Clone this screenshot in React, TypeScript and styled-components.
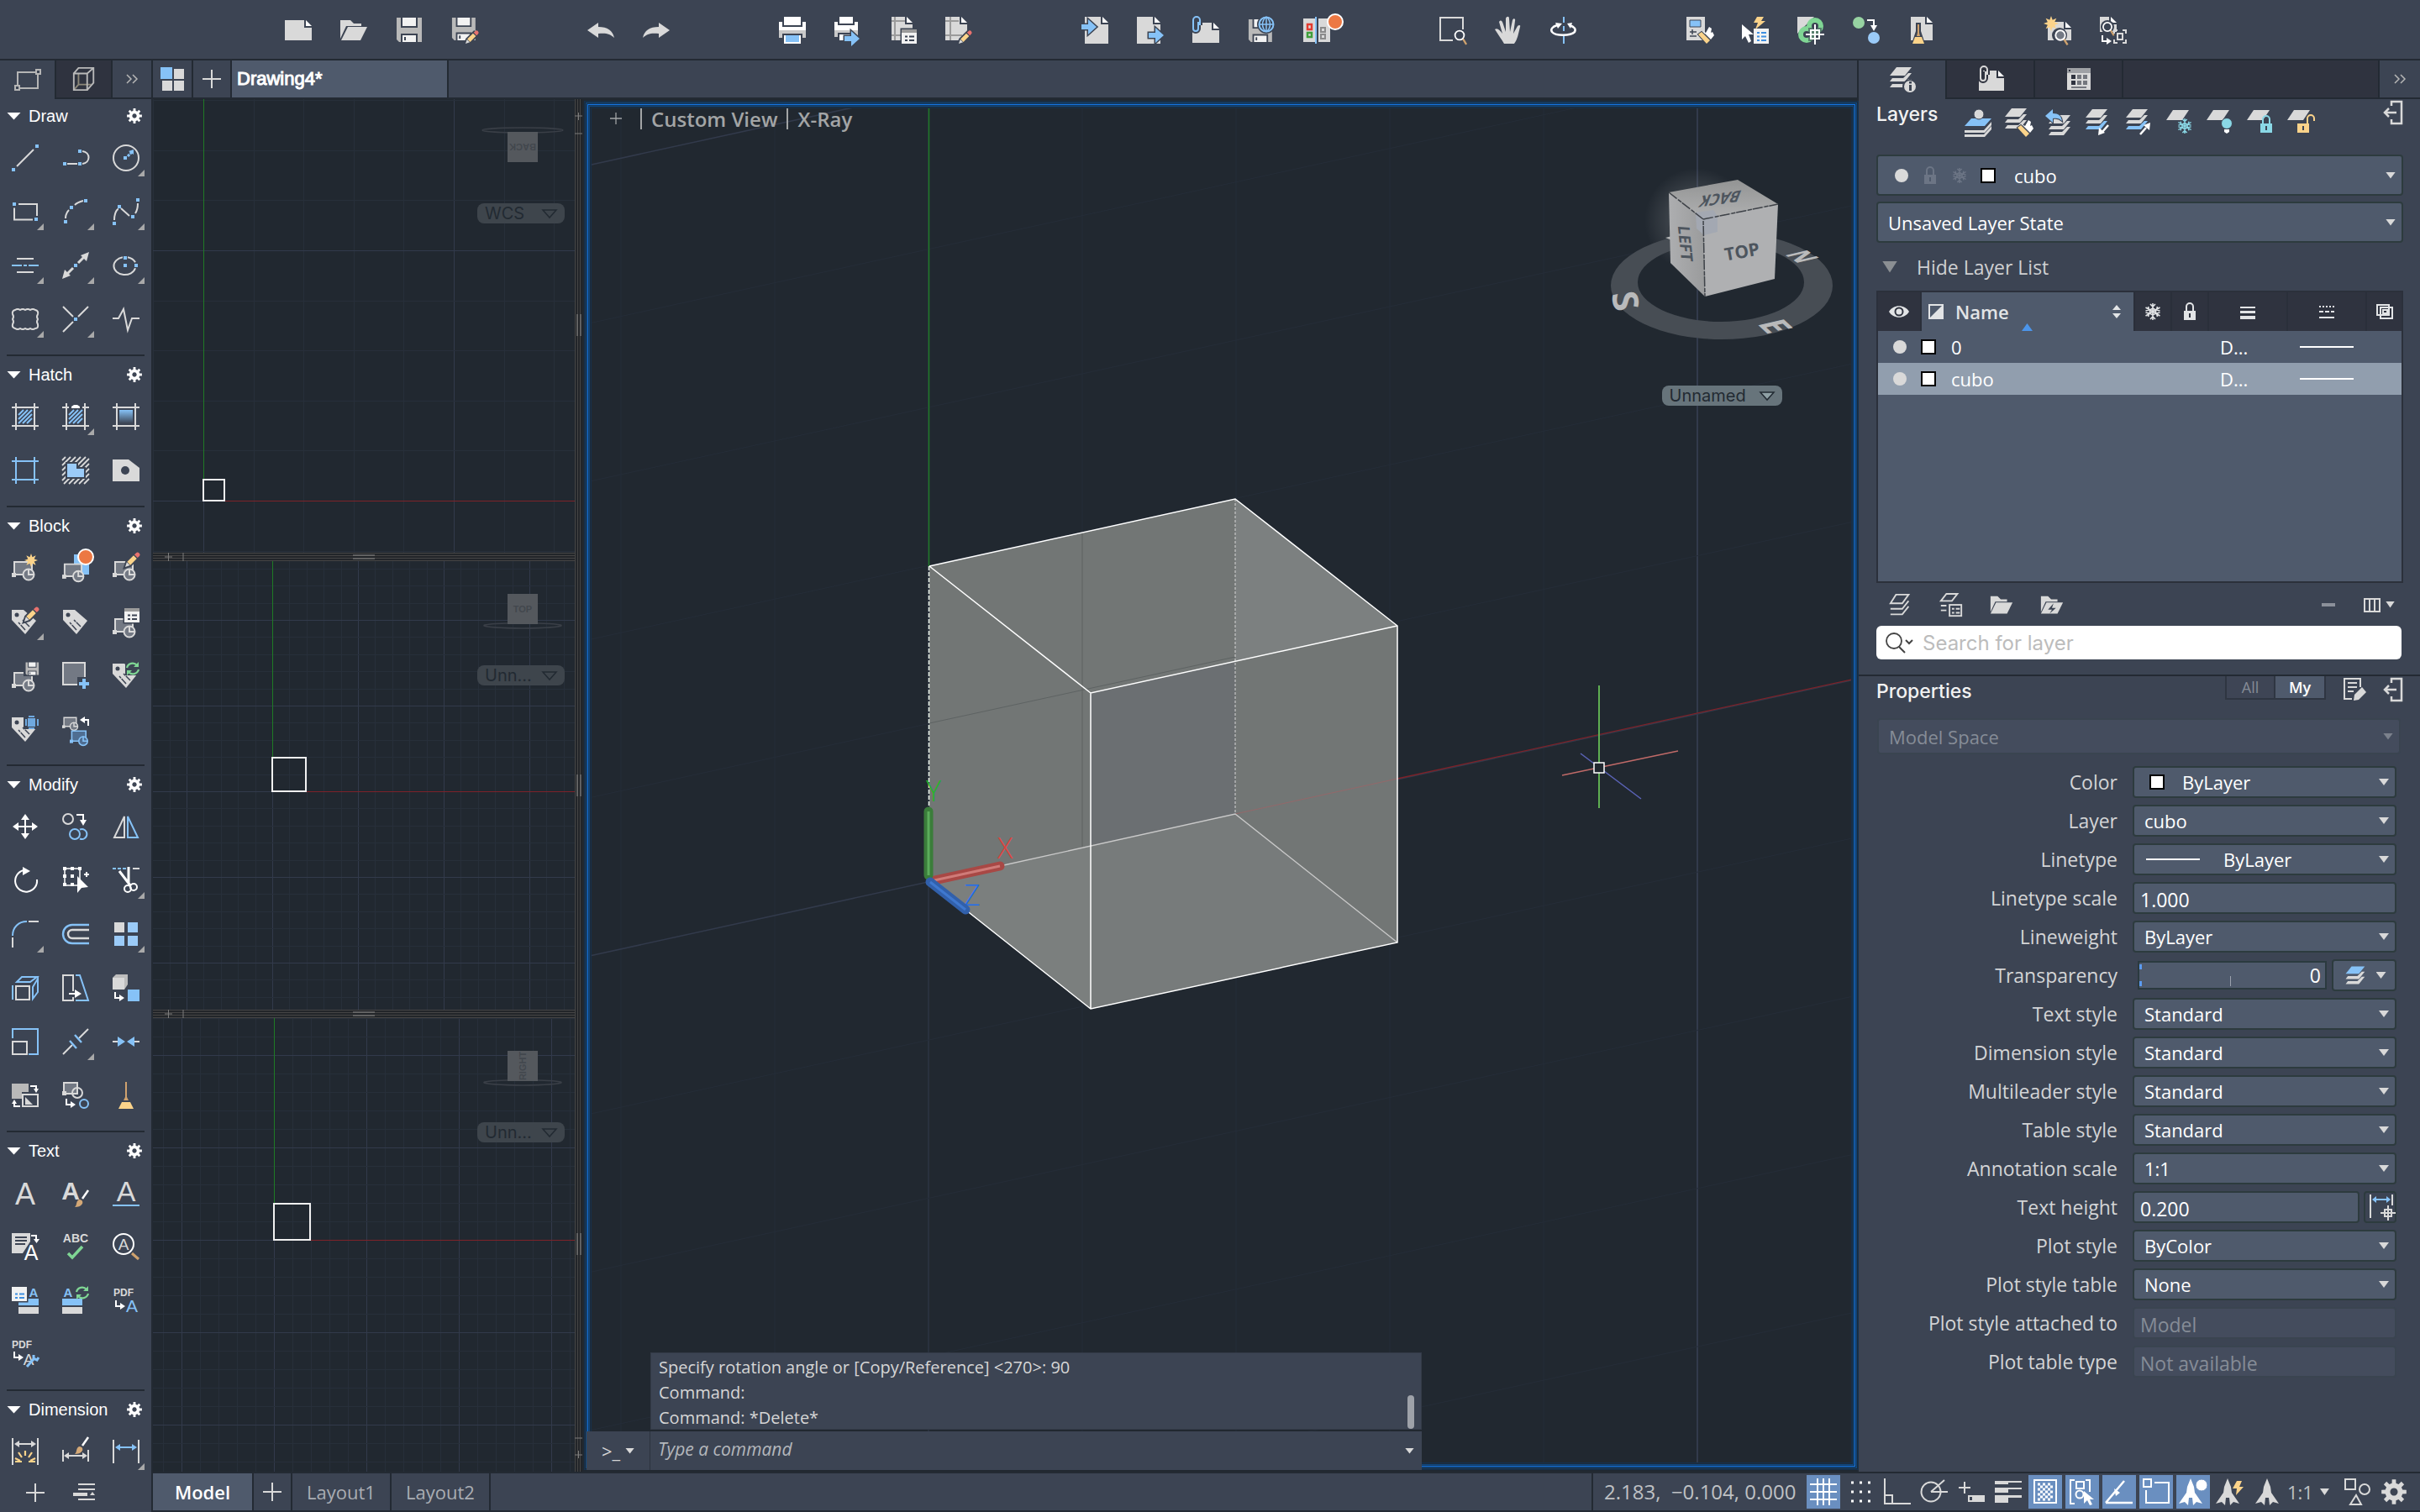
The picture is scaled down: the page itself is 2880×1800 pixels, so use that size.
import React, { ReactNode } from "react";
import styled, { createGlobalStyle, css } from "styled-components";

const C = {
  panel: "#3c4453",
  dark: "#2f333f",
  line: "#232a33",
  canvas: "#212830",
  field: "#4f5a6c",
  fieldLine: "#2d3b3e",
  light: "#d9d9d9",
  mid: "#737984",
  blue: "#86c2f7",
  yellow: "#fbd38a",
  green: "#7fd694",
  cyan: "#8ad8e6",
  orange: "#ec7843",
};
const UI = `"Open Sans", "Noto Sans", sans-serif`;
const HELV = `"Liberation Sans", Arial, sans-serif`;
const SF = `Inter, "Liberation Sans", sans-serif`;

const Global = createGlobalStyle`
  * { box-sizing: border-box; }
  body { margin: 0; background: ${C.canvas}; color: #e6e6e6; font-family: ${UI}; font-size: 22px; }
  button, input, select { font: inherit; color: inherit; margin: 0; padding: 0; border: 0; background: none; border-radius: 0; outline: none; }
  h2 { margin: 0; font-weight: 400; }
`;

/* ---------- icon parts ---------- */
const Glyph = styled.svg<{ $s: number }>`
  width: ${(p) => p.$s}px;
  height: ${(p) => p.$s}px;
  flex: none;
  display: block;
  overflow: visible;
  fill: none;
  font-family: ${HELV};
`;

const L = ({ d, c = C.light, w = 2, f = "none", ...r }: any) => <path d={d} stroke={c} strokeWidth={w} fill={f} {...r} />;
const F = ({ d, c = C.light, ...r }: any) => <path d={d} fill={c} {...r} />;
const Dots = ({ at }: { at: number[][] }) => (
  <>{at.map(([x, y], i) => <rect key={i} x={x - 2} y={y - 2} width={4} height={4} fill={C.blue} />)}</>
);
const At = ({ x = 0, y = 0, s = 1, children }: any) => <g transform={`translate(${x} ${y}) scale(${s})`}>{children}</g>;

const Pencil = ({ x, y, s = 1 }: any) => (
  <At x={x} y={y} s={s}>
    <path d="M0 0l2-6 10-10 4 4-10 10z" fill={C.panel} stroke={C.panel} strokeWidth={4} />
    <F d="M0 0l2-6 4 4z" />
    <F d="M2.500-6.500l8-8 4 4-8 8z" c={C.yellow} />
    <F d="M11.500-15.500l2-2a2.800 2.800 0 0 1 4 4l-2 2z" c="#e8726e" />
  </At>
);
const Floppy = ({ x = 0, y = 0, s = 1 }: any) => (
  <At x={x} y={y} s={s}>
    <F d="M1 1h30v29h-27l-3-3z" c="#b9b9b9" />
    <F d="M6 0h20v13h-20zM6 20h20v11h-20z" c={C.panel} />
    <F d="M8 1h16v10h-16zM8 22h16v8h-16z" c="#f2f2f2" />
    <F d="M10 24h2v4h-2z" c={C.panel} />
  </At>
);
const Block = ({ x = 0, y = 0, s = 1, c = C.light, f = C.mid }: any) => (
  <At x={x} y={y} s={s}>
    <path d="M3 9h21v15h-21z" fill={f} stroke={c} strokeWidth={2} />
    <F d="M0 22h5v5h-5z" c={c} />
    <circle cx={20} cy={24} r={6.500} fill={f} stroke={c} strokeWidth={2} />
    <path d="M20 17v7h7" stroke={c} strokeWidth={2} />
  </At>
);
const Tag = ({ x = 0, y = 0 }: any) => (
  <At x={x} y={y}>
    <F d="M0 2h14l15 13-13 16-16-17z" />
    <circle cx={6} cy={8} r={2.500} fill={C.panel} />
    <path d="M8 17l8 9M13 14l8 8" stroke={C.panel} strokeWidth={1.500} strokeDasharray="3 1 9 1" />
  </At>
);
const List = ({ x = 0, y = 0, c = C.panel, h = true }: any) => (
  <At x={x} y={y}>
    <rect x={-1.500} y={-1.500} width={21} height={20} fill={C.panel} />
    <rect width={18} height={17} fill="#f2f2f2" />
    {h && <rect width={18} height={4} fill="#9b9b9b" />}
    <path d="M4 8.500h3M9 8.500h6M4 13h3M9 13h6" stroke={c} strokeWidth={2} />
  </At>
);
const Refresh = ({ x = 0, y = 0 }: any) => (
  <At x={x} y={y}>
    <path d="M1 7a7 7 0 0 1 12-3M15 9a7 7 0 0 1-12 3" stroke={C.green} strokeWidth={2.200} />
    <F d="M15 0v6h-6zM1 16v-6h6z" c={C.green} />
  </At>
);
const star = (n: number, a: number, b: number) =>
  "M" + Array.from({ length: n * 2 }, (_, i) => {
    const r = i % 2 ? b : a, t = (i * Math.PI) / n - Math.PI / 2;
    return `${(r * Math.cos(t)).toFixed(2)} ${(r * Math.sin(t)).toFixed(2)}`;
  }).join("L") + "z";
const Spark = ({ x, y, r = 8 }: any) => <At x={x} y={y}><F d={star(8, r, r * 0.5)} c={C.yellow} /></At>;
const Badge = ({ x, y }: any) => <circle cx={x} cy={y} r={9} fill={C.orange} stroke="#fff" strokeWidth={2} />;
const Elbow = ({ x, y, r = 0 }: any) => (
  <g transform={`translate(${x} ${y}) rotate(${r})`}>
    <path d="M0 0v7h5" stroke="#fff" strokeWidth={2} />
    <F d="M5 3l6 4-6 4z" c="#fff" />
  </g>
);
const Hook = ({ x, y }: any) => (
  <At x={x} y={y}>
    <path d="M0 0h8v7" stroke="#fff" strokeWidth={2} />
    <F d="M4 6l4 7 4-7z" c="#fff" />
  </At>
);
const Doc = ({ x = 0, y = 0, w = 26, h = 32 }: any) => (
  <At x={x} y={y}>
    <F d={`M0 0h${w - 9}v9h9v${h - 9}h-${w}z`} />
    <F d={`M${w - 7} 0l7 7h-7z`} c="#fff" />
  </At>
);
const Arrow = ({ x, y, s = 1 }: any) => (
  <At x={x} y={y} s={s}>
    <path d="M0-3h8v-6l10 9-10 9v-6h-8z" fill={C.blue} stroke={C.panel} strokeWidth={3} paintOrder="stroke" />
  </At>
);
const Glass = ({ x, y, s = 1, f = "none" }: any) => (
  <At x={x} y={y} s={s}>
    <path d="M4 4l5 8" stroke="#cfa26e" strokeWidth={2.500} />
    <circle r={6} fill={f} stroke="#fff" strokeWidth={2} />
  </At>
);
const sheetPath = "M8 0h18l-8 10h-18z";
const strip = (y: number) => `M0 ${y}h18l8-10h-4l-6 6h-13z`;
const Sheets = ({ x = 0, y = 0, s = 1, c = [C.light, C.light, C.light] }: any) => (
  <At x={x} y={y} s={s}>
    <F d={sheetPath} c={c[0]} />
    <F d={strip(17)} c={c[1]} />
    <F d={strip(24)} c={c[2]} />
  </At>
);
const Snow = ({ x, y, c, s = 1 }: any) => (
  <At x={x} y={y} s={s}>
    <path d="M0-10v20M-8.500-5l17 10M-8.500 5l17-10M-3-9l3 3 3-3M-3 9l3-3 3 3M-8.500-1l4-1-1-4M8.500 1l-4 1 1 4M-8.500 1l4 1-1 4M8.500-1l-4-1 1-4M0-4l3.500 2v4l-3.500 2-3.500-2v-4z" stroke={c} strokeWidth={1.600} />
  </At>
);
const Lock = ({ x, y, c, open = false, bg = C.panel }: any) => (
  <At x={x} y={y}>
    <path d={open ? "M5-1v-6a4 4 0 0 1 8 0v3" : "M-4-1v-5a4 4 0 0 1 8 0v5"} stroke={c} strokeWidth={2} />
    <rect x={-7} y={-1} width={14} height={11} fill={c} />
    <rect x={-1} y={2} width={2} height={5} fill={bg} />
  </At>
);
const Brush = ({ x, y }: any) => (
  <At x={x} y={y}>
    <path d="M-7-1l4-3 10 10-4 4z" fill={C.yellow} stroke={C.panel} strokeWidth={2} paintOrder="stroke" />
    <F d="M-2-5l4 2 4-7 3 2-1 5 2-1 2 4-4 5z" c="#fff" />
  </At>
);
const PaintBrush = ({ x, y }: any) => (
  <At x={x} y={y}>
    <path d="M9 10L16 0" stroke="#fff" strokeWidth={2.500} />
    <F d="M0 20c3-2 1-7 5-9 4 0 5 3 4 5-2 3-5 4-9 4z" c="#d4a876" />
  </At>
);
const Frame = ({ c = C.light }: any) => <L d="M5 0v32M27 0v32M0 5h32M0 27h32" c={c} />;
const Hatching = ({ c = C.blue }: any) => (
  <L d="M8 14l6-6M8 19l11-11M8 24l16-16M13 24l11-11M18 24l6-6" c={c} w={2} />
);
const Cross = ({ x, y }: any) => (
  <At x={x} y={y}>
    <path d="M0-12v24M-11 0h22M-5-5h10v10h-10z" stroke="#fff" strokeWidth={2} />
  </At>
);
const gearD = (n: number, r: number, R: number) => {
  const p: string[] = [];
  for (let i = 0; i < n; i++)
    [[r, -0.3], [R, -0.2], [R, 0.2], [r, 0.3]].forEach(([q, o]) => {
      const t = ((i + o) * 2 * Math.PI) / n;
      p.push(`${(q * Math.sin(t)).toFixed(2)} ${(-q * Math.cos(t)).toFixed(2)}`);
    });
  return "M" + p.join("L") + "z";
};
const Gear = ({ s = 18, c = "#fff" }: any) => (
  <Glyph $s={s} viewBox="-10 -10 20 20" aria-hidden>
    <path d={gearD(8, 7, 10) + "M0-3a3 3 0 1 0 .01 0z"} fill={c} fillRule="evenodd" />
  </Glyph>
);
const Letter = ({ x, y, s, c = C.light, children, w = 400 }: any) => (
  <text x={x} y={y} fontSize={s} fill={c} fontWeight={w} textAnchor="middle">{children}</text>
);
const Person = ({ x = 16 }: any) => (
  <path transform={`translate(${x} 0)`} fill="currentColor" d="M0 0l4 10 1 7 9 13-7-2-4 4-1-9h-4l-1 9-4-4-7 2 9-13 1-7z" />
);

/* ---------- icon set ---------- */
const icons: Record<string, ReactNode> = {
  line: <><L d="M6 26L26 6" /><Dots at={[[2, 30], [30, 2]]} /></>,
  polyline: <><L d="M6 23h12M24 8c10 1 10 14 0 15" /><Dots at={[[3, 23], [21, 23], [21, 8]]} /></>,
  circle: <><circle cx={16} cy={16} r={15} stroke={C.light} strokeWidth={2} /><L d="M18 14l5-5" c={C.blue} w={3} strokeDasharray="3 1" /><F d="M25 6v6l-6-4z" c={C.blue} /><Dots at={[[15, 16]]} /></>,
  rect: <><L d="M8 7h22v14M25 25.500h-22v-14" /><Dots at={[[3, 7], [29, 25]]} /></>,
  arc: <><L d="M4 24c0-4 2-8 4-10M15 8c3-3 6-4 10-5" /><Dots at={[[28, 3], [11, 11], [4, 28]]} /></>,
  spline: <><L d="M2 26c0-8 3-13 5-13M10 12l10 9M27 18c2-3 3-8 3-12" /><Dots at={[[2, 30], [8, 10], [24, 22], [30, 2]]} /></>,
  cline: <><L d="M6 8h20M6 24h20" /><L d="M0 16h12M14 16h4M20 16h12" c={C.blue} /></>,
  xline: <><L d="M5 27l8-8M19 13l8-8" w={3} /><F d="M32 0l-3 11-7-7zM0 32l3-11 7 7z" /><Dots at={[[16, 16]]} /></>,
  ellipse: <><L d="M12 6.300a13 10.500 0 1 0 15 13M18 6.300a13 10.500 0 0 1 9 6" /><Dots at={[[15, 7], [15, 16], [28, 16]]} /></>,
  cloud: <path d="M4 5q3-2 6 0q3-2 6 0q3-2 6 0q3-2 6 0q4 1 3 5q-2 3 0 6q-2 3 0 6q1 5-3 5q-3 2-6 0q-3 2-6 0q-3 2-6 0q-3 2-6 0q-4-1-3-5q2-3 0-6q2-3 0-6q-1-4 3-5z" stroke={C.light} strokeWidth={2} />,
  xtrim: <><L d="M1 1l12 12M31 1l-12 12M1 31l12-12" /><Dots at={[[16, 16]]} /></>,
  pulse: <L d="M0 15h7l6-11 5 25 5-14h9" />,
  hatch: <><Frame /><Hatching /></>,
  hatch2: <><Frame /><Hatching /><F d="M8 1h16v6h-16z" c={C.panel} /><F d="M11 6v-2l3-2h4l3 2v2z" c="#fff" /></>,
  gradient: <><defs><linearGradient id="gr" x1="0" y1="0" x2="0" y2="1"><stop offset="0" stopColor={C.blue} /><stop offset="1" stopColor={C.panel} /></linearGradient></defs><Frame /><rect x={8} y={8} width={16} height={16} fill="url(#gr)" /></>,
  boundary: <Frame c={C.blue} />,
  region: <><L d="M0 4l4-4M0 10l10-10M0 16l16-16M0 22l22-22M0 28l28-28M2 32l30-30M8 32l24-24M14 32l18-18M20 32l12-12M26 32l6-6" w={1.800} /><F d="M4 6h15v6h9v14h-24z" c={C.panel} /><F d="M6 8h11v6h9v10h-20z" c="#9bcbf8" /></>,
  wipeout: <><F d="M0 3h19l13 10v16h-32z" /><circle cx={15} cy={16} r={5} fill={C.panel} /></>,
  blockNew: <><Block /><Spark x={23} y={7} /></>,
  blockIns: <><F d="M14 0h18v24h-18z" c={C.blue} /><Block y={3} s={0.96} /><Badge x={28} y={3} /></>,
  blockEdit: <><Block y={0} /><Pencil x={15} y={15} s={0.950} /></>,
  tagEdit: <><Tag /><Pencil x={15} y={16} s={0.950} /></>,
  tag: <Tag x={1} />,
  blockList: <><Block y={4} /><List x={14} y={0} /></>,
  blockSave: <><Block y={4} /><rect x={14} y={-1} width={18} height={18} fill={C.panel} /><Floppy x={16} y={0} s={0.520} /></>,
  baseAdd: <><path d="M1 1h26v26h-26z" fill={C.mid} stroke={C.light} strokeWidth={2} /><F d="M18 18h14v14h-14z" c={C.panel} /><L d="M26 20v12M20 26h12" c={C.blue} w={4} /></>,
  tagSync: <><Tag /><F d="M15 0h17v16h-17z" c={C.panel} /><Refresh x={16} y={0} /></>,
  tagPos: <><Tag /><F d="M14 0h18v16h-18z" c={C.panel} /><F d="M19 3h9v10h-9zM20 0h7v2h-7zM20 14h7v2h-7zM16 4h2v8h-2zM30 4h2v8h-2z" c="#6fa9df" /></>,
  blockRep: <><Block x={0} y={-4} s={0.700} /><Block x={9} y={11} s={0.800} c={C.blue} f="#4f6e92" /><path d="M31 12v-7h-6" stroke="#fff" strokeWidth={2} /><F d="M27 1l-6 4 6 4z" c="#fff" /></>,
  move: <><L d="M16 5v22M5 16h22" c="#fff" /><F d="M16 1l5 7h-10zM16 31l5-7h-10zM1 16l7-5v10zM31 16l-7-5v10z" c="#fff" /></>,
  copy: <><circle cx={7} cy={7} r={6} stroke={C.light} strokeWidth={2} /><circle cx={15} cy={25} r={6} stroke={C.blue} strokeWidth={2} /><L d="M21 19.500a6 6 0 1 1 0 11" c={C.blue} /><Hook x={17} y={2} /></>,
  mirror: <><L d="M14 4v25h-12z" /><L d="M18 4v25h12z" c={C.blue} /></>,
  rotate: <><L d="M14 4a13 13 0 1 0 16 11" c="#fff" /><F d="M13 0l9 5-9 5z" c="#fff" /></>,
  stretch: <><L d="M3 2h18v20h-18z" c="#fff" w={1.500} /><F d="M1 0h4v4h-4zM10 0h4v4h-4zM19 0h4v4h-4zM1 9h4v4h-4zM1 19h4v4h-4zM10 19h4v4h-4zM10 9h4v4h-4z" c="#fff" /><F d="M18 11v20l5-6 8-1z" c="#fff" /><L d="M29 6v6M26 9h6" c="#fff" /></>,
  trim: <><L d="M0 2h17" c={C.blue} strokeDasharray="4 2" /><L d="M24 2h8" /><L d="M8 5l13 17M19 0v20" c="#fff" w={3} /><circle cx={18} cy={26} r={4} stroke="#fff" strokeWidth={2} /><circle cx={25} cy={24} r={4} stroke="#fff" strokeWidth={2} /></>,
  fillet: <><L d="M1 18C1 8 8 1 18 1" c={C.blue} /><L d="M20 1h12M1 20v12" /></>,
  offset: <><L d="M32 5h-20a11 11 0 0 0 0 22h20" c={C.blue} w={2.400} /><L d="M32 11h-20a5 5 0 0 0 0 10h20" w={2.400} /></>,
  array: <><F d="M2 2h12v12h-12z" /><F d="M18 2h12v12h-12zM2 18h12v12h-12zM18 18h12v12h-12z" c="#9bcbf8" /></>,
  solid: <><L d="M5 14h16v16h-16z" /><L d="M1 13v17M6 9l6-6h18l-8 6zM31 5v16l-6 8v-14z" c={C.blue} /></>,
  extend: <><L d="M13 20v-19h-12v30h12v-4" /><L d="M16 1h5l10 30h-15" c={C.blue} /><L d="M8 23h9" c="#fff" /><F d="M15 18l8 5-8 5z" c="#fff" /></>,
  flat: <><F d="M0 4l4-4h14v12l-4 6h-14z" c="#bdbdbd" /><F d="M0 4h14v14h-14z" /><F d="M18 18h14v14h-14z" c={C.blue} /><Elbow x={3} y={21} /></>,
  scale: <><L d="M1 16h17v15h-17z" /><L d="M1 12v-11h30v30h-11" c={C.blue} /></>,
  breakAt: <><L d="M1 31l11-11M20 12l11-11" /><L d="M9 15l8 9M15 8l8 9" c={C.blue} w={2.400} /></>,
  join: <><L d="M0 16h7M25 16h7" /><F d="M6 10l9 6-9 6zM26 10l-9 6 9 6z" c={C.blue} /></>,
  swap: <><F d="M0 2h20v10h-8v8h-12z" c="#b9b9b9" /><L d="M13 15h18v14h-18z" /><F d="M16 18l9 9h-9z" /><path d="M22 5h7v3M10 29h-7v-3" stroke="#fff" strokeWidth={2} /><F d="M26 8h6l-3 5zM0 26h6l-3-5z" c="#fff" /></>,
  explode: <><path d="M2 1h16v13h-16z" fill={C.mid} stroke={C.light} strokeWidth={2} /><F d="M0 11h5v5h-5z" /><circle cx={18} cy={13} r={6} stroke={C.light} strokeWidth={2} /><circle cx={26} cy={26} r={5} stroke={C.blue} strokeWidth={2} /><Elbow x={5} y={20} /></>,
  broom: <><F d="M15 0h2v18l2 4h-6l2-4z" c="#cfa26e" /><F d="M11 24h10l4 8h-18z" c={C.yellow} /></>,
  tA: <Letter x={16} y={30} s={36}>A</Letter>,
  tBrush: <><Letter x={10} y={24} s={30} w={700}>A</Letter><PaintBrush x={15} y={13} /></>,
  tU: <><Letter x={16} y={26} s={34}>A</Letter><L d="M0 31h32" c={C.blue} /></>,
  tDoc: <><F d="M0 0h22v10l-9 14h-13z" /><L d="M4 5h14M4 9h14M4 13h12" c={C.panel} /><Letter x={23} y={32} s={25} c="#fff">A</Letter><path d="M23 3h6v4" stroke="#fff" strokeWidth={2} /><F d="M26 7h7l-3.500 5z" c="#fff" /></>,
  abc: <><Letter x={16} y={11} s={14} w={700}>ABC</Letter><L d="M7 24l5 5 12-13" c={C.green} w={3.500} /></>,
  tFind: <><circle cx={13} cy={13} r={12} stroke="#fff" strokeWidth={2} /><Letter x={13} y={20} s={19}>A</Letter><L d="M23 24l8 7" c="#cfa26e" w={3} /></>,
  scList: <><F d="M8 14h24v8h-24z" c={C.blue} /><F d="M8 24h24v8h-24z" /><List x={0} y={0} h={false} c="#3f8fe0" /><Letter x={26} y={12} s={15} c={C.blue} w={700}>A</Letter></>,
  scSync: <><F d="M0 14h24v8h-24z" c={C.blue} /><F d="M0 24h24v8h-24z" /><Letter x={7} y={12} s={15} c={C.blue} w={700}>A</Letter><Refresh x={16} y={-1} /></>,
  pdfA: <><Letter x={13} y={11} s={12} w={700}>PDF</Letter><Elbow x={4} y={16} /><Letter x={23} y={30} s={21} c={C.blue}>A</Letter></>,
  pdfFix: <><Letter x={12} y={9} s={12} w={700}>PDF</Letter><Elbow x={3} y={13} /><Letter x={20} y={29} s={19}>A</Letter><L d="M18 31l8-9" c={C.blue} w={3} /><L d="M26 17v4l4 2 2-3" c={C.blue} w={3} /></>,
  dim1: <><L d="M1 0v32M31 0v32M5 7h22" /><F d="M3 7l6-4v8zM29 7l-6-4v8z" /><L d="M16 15v6M8 17l4 6M24 17l-4 6M4 24l6 3M28 24l-6 3M4 28h8M20 28h8" c={C.yellow} w={2.200} /></>,
  dim2: <><L d="M1 14v14M31 14v14M4 21h24" /><F d="M2 21l6-4v8zM30 21l-6-4v8z" /><PaintBrush x={15} y={-1} /></>,
  dim3: <><L d="M1 2v28M31 2v28" /><L d="M5 11h22" c={C.blue} /><F d="M3 11l6-4v8zM29 11l-6-4v8z" c={C.blue} /></>,

  fNew: <Doc x={0} y={4} w={32} h={24} />,
  fOpen: <><F d="M0 4h12l4 4h9v3h-18l-7 15z" /><F d="M9 12h23l-8 16h-23z" /></>,
  fSave: <Floppy />,
  fSaveAs: <><Floppy s={0.930} /><Pencil x={17} y={32} s={0.850} /></>,
  undo: <F d="M0 16l13-9v5c11 0 17 4 19 13-5-5-10-6-19-5v5z" />,
  redo: <F d="M32 16l-13-9v5c-11 0-17 4-19 13 5-5 10-6 19-5v5z" />,
  print: <><F d="M0 6h32v18h-32z" c="#fff" /><F d="M0 16h32v9h-32z" c="#c9c9c9" /><F d="M4 0h24v12h-24zM4 20h24v12h-24z" c={C.panel} /><F d="M6 0h20v10h-20z" c="#fff" /><F d="M6 22h20v10h-20z" c="#fff" /><F d="M8 22h16v8h-16z" c={C.blue} /></>,
  printPrev: <><F d="M0 6h28v16h-28z" c="#fff" /><F d="M0 16h28v8h-28z" c="#c9c9c9" /><F d="M4 0h20v10h-20zM4 19h20v11h-20z" c={C.panel} /><F d="M6 0h16v8h-16zM6 21h16v7h-16z" c="#fff" /><Arrow x={12} y={26} /></>,
  page: <><Doc x={2} w={25} h={28} /><L d="M6 0v28M2 5h16M2 22h20" c="#9b9b9b" /><List x={14} y={15} /></>,
  pageEdit: <><Doc x={0} w={26} h={28} /><L d="M6 0v28M0 5h16M0 22h20" c="#9b9b9b" /><Pencil x={16} y={32} s={0.850} /></>,
  imp: <><Doc x={4} w={28} /><Arrow x={0} y={12} /></>,
  exp: <><Doc x={0} w={28} /><Arrow x={14} y={22} /></>,
  attach: <><Doc x={0} y={7} w={32} h={24} /><path d="M9 10v-6a4 4 0 0 0-8 0v10a3 3 0 0 0 6 0v-8" stroke={C.panel} strokeWidth={6} /><path d="M9 10v-6a4 4 0 0 0-8 0v10a3 3 0 0 0 6 0v-8" stroke={C.blue} strokeWidth={2} /></>,
  web: <><Floppy y={2} s={0.930} /><circle cx={22} cy={9} r={11} fill={C.panel} /><circle cx={22} cy={9} r={8.500} stroke={C.blue} strokeWidth={2} /><path d="M14 9h17M22 0v18M22 0c-6 5-6 13 0 18M22 0c6 5 6 13 0 18" stroke={C.blue} strokeWidth={1.500} /></>,
  compare: <><F d="M0 2h14v28h-14zM18 2h14v28h-14z" /><L d="M5 9h5v6h-5z" c="#e23b30" w={2.500} /><L d="M5 19h5v5h-5z" c="#3f9e3a" w={2.500} /><L d="M21 13h5v5h-5zM21 21h5v5h-5z" c="#8b8b8b" /><L d="M15 0v32" c={C.blue} /><Badge x={38} y={6} /></>,
  zoomW: <><L d="M16 28h-15v-27h27v14" /><Glass x={24} y={22} s={0.900} /></>,
  pan: <path d="M11 32c-3-5-7-11-11-17 3-2 6 1 9 5l-4-14c2-3 4-1 5 3l3 9v-16c1-3 4-3 4 0l1 16 3-14c1-3 4-2 3 1l-2 15 5-9c2-2 4-1 3 1-2 8-3 15-7 20z" fill={C.light} />,
  orbit: <><L d="M16 0v7M16 11v6M16 23v9" c={C.blue} /><L d="M8 10c-6 2-8 5-6 8 4 5 22 5 27 0 2-4-1-6-6-8" c="#fff" w={2.500} /><F d="M6 7l8 1-5 6zM20 8l6-1-2 7z" c="#fff" /></>,
  props: <><F d="M0 0h22v28h-22z" /><L d="M4 4h13v8h-13z" c={C.panel} w={1} f={C.blue} /><L d="M4 18h8M4 23h8M7 15v6" c={C.panel} w={1.500} /><Brush x={21} y={22} /></>,
  qsel: <><F d="M14 32v-18h18v18z" c="#f2f2f2" /><L d="M18 19h3M23 19h6M18 23.500h3M23 23.500h6M18 28h3M23 28h6" c="#3f8fe0" w={1.800} /><F d="M0 9v18l4-4 4 8 3-2-3-8h6z" c="#fff" /><F d="M18 0h8l-3 5h5l-12 10 3-8h-5z" c={C.yellow} /></>,
  gcenter: <><F d="M0 0h20l-20 20z" /><circle cx={21} cy={11} r={7} stroke={C.green} strokeWidth={6} /><circle cx={11} cy={21} r={7} stroke={C.green} strokeWidth={6} /><rect x={13} y={13} width={16} height={16} fill={C.panel} opacity={0.6} /><Cross x={21} y={21} /></>,
  cgeo: <><circle cx={7} cy={7} r={7} fill="#97d3a2" /><circle cx={25} cy={25} r={7} fill="#9bcbf8" /><Hook x={17} y={4} /></>,
  purge: <><Doc x={3} w={26} h={28} /><F d="M9 7h6v10l5 15h-16l5-15z" c={C.panel} /><F d="M11 9h2v10l1 4h-4l1-4z" c="#cfa26e" /><F d="M8 24h8l3 8h-14z" c={C.yellow} /></>,
  isoNew: <><Doc x={4} y={6} w={28} h={22} /><circle cx={18} cy={22} r={9} fill={C.panel} /><Glass x={19} y={22} f={C.mid} s={0.950} /><Spark x={8} y={8} r={9} /></>,
  isoRep: <><Doc x={0} w={20} h={18} /><circle cx={9} cy={12} r={8} fill={C.panel} /><Glass x={9} y={12} s={0.850} /><Elbow x={3} y={22} /><L d="M17 20v-4h4M27 16h4v4M31 27v4h-4M21 31h-4v-4M21 20h6v7h-6z" /></>,

  lyWalk: <><F d="M8 12h24l-8 9h-24z" c={C.blue} /><circle cx={17} cy={7} r={6} fill={C.light} stroke={C.panel} /><F d="M0 26h23l9-10v4l-8 9h-24zM0 31h23l9-10v4l-8 9h-24z" /></>,
  lyMatch: <><Sheets /><Brush x={22} y={24} /></>,
  lyPrev: <><Sheets x={4} y={8} /><path d="M0 9l9-8v5c7 0 10 3 11 9-3-3-6-4-11-3v5z" fill={C.blue} stroke={C.panel} strokeWidth={2} paintOrder="stroke" /></>,
  lyIso: <><Sheets c={[C.light, C.light, C.blue]} y={1} /><L d="M27 20l-7 8" c="#fff" w={2.500} /><F d="M15 32l1-9 7 6z" c="#fff" /></>,
  lyUn: <><Sheets c={[C.light, C.light, C.blue]} y={1} /><L d="M17 31l7-8" c="#fff" w={2.500} /><F d="M29 17l-1 9-7-6z" c="#fff" /></>,
  lyFrz: <><F d="M8 2h19l-8 12h-19z" /><Snow x={22} y={21} c={C.cyan} s={0.900} /></>,
  lyOff: <><F d="M8 2h19l-8 12h-19z" /><circle cx={24} cy={18} r={6.500} fill={C.cyan} stroke={C.panel} /><F d="M21 25h6v3l-3 2-3-2z" c="#fff" /></>,
  lyLock: <><F d="M8 2h19l-8 12h-19z" /><Lock x={23} y={19} c={C.cyan} /></>,
  lyUnlock: <><F d="M8 2h19l-8 12h-19z" /><Lock x={19} y={19} c={C.yellow} open /></>,
  sheetLines: <L d="M10 2h16l-8 11h-15zM3 20h15l8-10M3 27h15l8-10" />,
  sheetList: <><L d="M10 1h14l-7 9h-14zM3 16h7M3 22h7" /><rect x={14} y={15} width={15} height={14} stroke={C.light} strokeWidth={2} /><L d="M17 20h3M22 20h5M17 25h3M22 25h5" /></>,
  folder: <><F d="M2 4h9l4 4h8v3h-15l-6 13z" /><F d="M9 12h21l-7 14h-21z" /></>,
  folderFx: <><F d="M2 4h9l4 4h8v3h-15l-6 13z" /><F d="M9 12h21l-7 14h-21z" /><F d="M18 13l-7 8h5l-3 5 8-7h-5z" c={C.panel} /></>,
  propEdit: <><L d="M13 27h-9v-24h19v10" /><L d="M8 8h11M8 13h11M8 18h7" /><F d="M15 29l1-7 9-9 5 6-9 9z" /></>,
  layersBlue: <Sheets x={4} y={4} c={[C.blue, C.light, C.light]} />,
  dock: <L d="M18 8v-5h12v26h-12v-5M24 16h-13M15 11l-5 5 5 5" w={2.500} />,
  pick: <><L d="M4 1v28M30 1v13" /><L d="M9 7h17" c={C.blue} /><F d="M6 7l5-4v8zM28 7l-5-4v8z" c={C.blue} /><L d="M25 14v18M16 23h18M21 19h8v8h-8z" /></>,
  rInfo: <><Sheets x={1} y={1} /><circle cx={25} cy={24} r={8} fill={C.light} stroke={C.panel} strokeWidth={2} /><F d="M24 22h3v7h-3zM24 18h3v2.500h-3z" c={C.panel} /></>,
  rClip: <><Doc x={2} y={6} w={30} h={24} /><path d="M12 11v-6a4 4 0 0 0-8 0v10a3 3 0 0 0 6 0v-8" stroke={C.dark} strokeWidth={6} /><path d="M12 11v-6a4 4 0 0 0-8 0v10a3 3 0 0 0 6 0v-8" stroke={C.light} strokeWidth={2} /></>,
  rCalc: <><F d="M2 3h28v26h-28z" /><F d="M2 3h28v6h-28z" c="#9fa1a5" /><F d="M7 11h5v5h-5zM7 18h5v5h-5zM4 5h2v2h-2z" c={C.dark} /><F d="M14 11h5v5h-5zM14 18h5v5h-5zM21 11h5v5h-5zM21 18h5v5h-5zM7 25h18v2h-18z" c="#74777e" /></>,
  lRect: <><L d="M4 7h24v19h-24z" c="#b5b5b5" /><path d="M26 4h5v5h-5zM1 23h5v5h-5z" stroke="#b5b5b5" fill={C.panel} strokeWidth={2} /></>,
  lBox: <><L d="M9 9v14h16M9 23l-6 7" c="#8c8778" /><L d="M3 9h17v21h-17zM3 9l6-7h19v19l-8 9M20 9l8-7" c="#b9b9b9" /></>,

  sGrid: <L d="M9 0v32M16 0v32M23 0v32M0 7h32M0 16h32M0 25h32" c="#fff" />,
  sSnap: <L d="M5 5h24M5 16h24M5 27h24" c="#fff" w={3} strokeDasharray="3 7" />,
  sOrtho: <L d="M1 0v30h31M1 20h9v10" />,
  sPolar: <><circle cx={12} cy={16} r={11.500} stroke={C.light} strokeWidth={2} /><L d="M12 16h20M12 16L28 2" /></>,
  sDyn: <><L d="M8 4v14M1 11h14" /><F d="M12 20h20v8h-20z" /><F d="M14 22h3v4h-3z" c={C.panel} /></>,
  sLw: <F d="M0 3h32v2h-16v2h-16zM0 11h32v2h-16v4h-16zM0 20h32v3h-16v6h-16z" />,
  sTrans: <><L d="M3 2h26v27h-26z" c="#fff" /><L d="M7 7h18M7 13h18M7 19h18M7 25h18" c="#fff" w={3} strokeDasharray="3 3" /><L d="M10 10h15M10 16h15M10 22h15" c="#fff" w={3} strokeDasharray="3 3" /></>,
  sCyc: <><L d="M7 2h-5v28h5M20 2h5v14M9 4h9v8h-9z" c="#fff" /><circle cx={13} cy={19} r={4.500} stroke="#fff" strokeWidth={2} /><F d="M18 15v15l4-4 3 6 3-1-3-6h5z" c="#fff" /></>,
  sOtrack: <><L d="M0 29h32M0 29L22 3" c="#fff" w={2.500} /><F d="M10 12l7 5-5 4z" c="#fff" /></>,
  sOsnap: <><L d="M14 5h17v24h-27v-15" c="#fff" /><L d="M1 1h9v9h-9z" c="#fff" /></>,
  sAnno: <><g color="#fff"><Person x={13} /></g><circle cx={26} cy={8} r={7} fill="#fff" stroke="#6a8fc0" /></>,
  sAnnoAuto: <><g color={C.light}><Person x={13} /></g><F d="M24 3l-5 9h5l-1 8 9-10h-5l3-7z" c={C.yellow} /></>,
  sAnnoPl: <g color={C.light}><Person /></g>,
  sShapes: <><L d="M2 1h12v12h-12z" /><circle cx={25} cy={13} r={6} stroke={C.light} strokeWidth={2} /><L d="M15 20l6 11h-13z" /></>,
};

const Icon = ({ name, s = 32 }: { name: string; s?: number }) => (
  <Glyph $s={s} viewBox="0 0 32 32" aria-hidden>{icons[name]}</Glyph>
);
const Plus = ({ s = 22, c = C.light }: any) => (
  <Glyph $s={s} viewBox="0 0 22 22" aria-hidden><path d="M11 0v22M0 11h22" stroke={c} strokeWidth={2} /></Glyph>
);
const Chevrons = () => (
  <Glyph $s={14} viewBox="0 0 14 14" aria-hidden><path d="M1 2l5 5-5 5M8 2l5 5-5 5" stroke="#b5b5b5" strokeWidth={1.500} /></Glyph>
);
const Tri = styled.span<{ $w?: number; $h?: number; $c?: string; $up?: boolean }>`
  flex: none;
  width: ${(p) => p.$w ?? 12}px;
  height: ${(p) => p.$h ?? 8}px;
  background: ${(p) => p.$c ?? "#d9d9d9"};
  clip-path: ${(p) => (p.$up ? "polygon(50% 0, 100% 100%, 0 100%)" : "polygon(0 0, 100% 0, 50% 100%)")};
`;

/* ---------- shell ---------- */
const Shell = styled.div`
  height: 100vh;
  display: flex;
  flex-direction: column;
  background: ${C.line};
  overflow: hidden;
`;
const TopBar = styled.header`
  flex: none;
  height: 70px;
  margin-bottom: 2px;
  padding: 2px 10px 0 0;
  background: ${C.panel};
  display: flex;
  justify-content: center;
  align-items: center;
  gap: 96px;
`;
const Group = styled.div`
  display: flex;
`;
const BarButton = styled.button`
  width: 66px;
  height: 44px;
  display: grid;
  place-items: center;
`;
const Body = styled.div`
  flex: 1;
  min-height: 0;
  display: grid;
  grid-template-columns: 180px minmax(0, 1fr) 668px;
  grid-template-rows: minmax(0, 1fr) 48px;
  column-gap: 2px;
`;

/* ---------- left tools ---------- */
const Tools = styled.aside`
  grid-row: 1 / 3;
  display: flex;
  flex-direction: column;
  min-height: 0;
  background: ${C.panel};
`;
const ModeTabs = styled.div`
  flex: none;
  display: grid;
  grid-template-columns: 65px 65px 46px;
  column-gap: 2px;
  background: ${C.line};
`;
const ModeTab = styled.button<{ $kind: "on" | "off" | "more" }>`
  height: ${(p) => (p.$kind === "on" ? 46 : 44)}px;
  display: grid;
  place-items: center;
  background: ${(p) => (p.$kind === "off" ? C.dark : C.panel)};
`;
const Sections = styled.div`
  flex: 1;
  min-height: 0;
  overflow: hidden;
  padding-top: 2px;
`;
const SectionHead = styled.div`
  height: 36px;
  padding: 0 11px 0 8px;
  display: flex;
  align-items: center;
  font-family: ${HELV};
  font-size: 20px;
  color: #fff;
`;
const Fold = styled.button`
  flex: 1;
  display: flex;
  align-items: center;
  gap: 9px;
  text-align: left;
`;
const ToolGrid = styled.div`
  display: grid;
  grid-template-columns: repeat(3, 60px);
`;
const Tool = styled.button<{ $more?: boolean }>`
  height: 64px;
  display: grid;
  place-items: center;
  position: relative;
  ${(p) => p.$more && css`
    &::after {
      content: "";
      position: absolute;
      right: 8px;
      bottom: 10px;
      width: 8px;
      height: 8px;
      background: #a9a9a9;
      clip-path: polygon(100% 0, 100% 100%, 0 100%);
    }
  `}
`;
const Rule = styled.hr`
  height: 2px;
  border: 0;
  margin: 10px 8px 4px;
  background: ${C.line};
`;
const ToolsFoot = styled.div`
  flex: none;
  height: 46px;
  padding: 0 29px;
  display: flex;
  align-items: center;
  gap: 32px;
`;
const FootButton = styled.button`
  display: grid;
  place-items: center;
  width: 26px;
  height: 40px;
`;

const sections: { title: string; tools: string[] }[] = [
  { title: "Draw", tools: ["line", "polyline", "circle+", "rect+", "arc+", "spline+", "cline+", "xline+", "ellipse+", "cloud+", "xtrim+", "pulse"] },
  { title: "Hatch", tools: ["hatch", "hatch2+", "gradient", "boundary", "region", "wipeout"] },
  { title: "Block", tools: ["blockNew", "blockIns", "blockEdit", "tagEdit+", "tag", "blockList", "blockSave", "baseAdd", "tagSync", "tagPos", "blockRep"] },
  { title: "Modify", tools: ["move", "copy", "mirror", "rotate", "stretch", "trim+", "fillet+", "offset", "array+", "solid", "extend", "flat", "scale", "breakAt+", "join", "swap", "explode", "broom"] },
  { title: "Text", tools: ["tA", "tBrush", "tU", "tDoc", "abc", "tFind", "scList", "scSync", "pdfA", "pdfFix"] },
  { title: "Dimension", tools: ["dim1", "dim2", "dim3+"] },
];

const LeftPanel = () => (
  <Tools>
    <ModeTabs>
      <ModeTab $kind="on" aria-label="2D drafting"><Icon name="lRect" /></ModeTab>
      <ModeTab $kind="off" aria-label="3D modeling"><Icon name="lBox" s={30} /></ModeTab>
      <ModeTab $kind="more" aria-label="More tool sets"><Chevrons /></ModeTab>
    </ModeTabs>
    <Sections>
      {sections.map((s, i) => (
        <section key={s.title}>
          <SectionHead>
            <Fold><Tri $w={17} $h={9} $c="#fff" />{s.title}</Fold>
            <button aria-label={`${s.title} settings`}><Gear /></button>
          </SectionHead>
          <ToolGrid>
            {s.tools.map((t) => {
              const n = t.replace("+", "");
              return <Tool key={t} $more={t !== n} aria-label={n}><Icon name={n} /></Tool>;
            })}
          </ToolGrid>
          {i < sections.length - 1 && <Rule />}
        </section>
      ))}
    </Sections>
    <ToolsFoot>
      <FootButton aria-label="Add tool set"><Plus /></FootButton>
      <FootButton aria-label="Tool set order">
        <Glyph $s={26} viewBox="0 0 26 26" aria-hidden>
          <path d="M6 3h20M6 9h20M6 21h20" stroke={C.light} strokeWidth={2} />
          <path d="M0 13h17v4h-17zM20 16l3-4 3 4z" fill={C.light} />
        </Glyph>
      </FootButton>
    </ToolsFoot>
  </Tools>
);

/* ---------- centre ---------- */
const Center = styled.main`
  display: flex;
  flex-direction: column;
  min-width: 0;
  min-height: 0;
`;
const FileTabs = styled.nav`
  flex: none;
  height: 44px;
  display: grid;
  grid-template-columns: 46px 44px 256px 1fr;
  column-gap: 2px;
`;
const FileTab = styled.button<{ $on?: boolean }>`
  background: ${(p) => (p.$on ? C.field : C.panel)};
  color: #fff;
  display: flex;
  align-items: center;
  justify-content: ${(p) => (p.$on ? "flex-start" : "center")};
  padding-left: ${(p) => (p.$on ? 6 : 0)}px;
  font-family: ${HELV};
  font-size: 22px;
  -webkit-text-stroke: ${(p) => (p.$on ? "1px #fff" : "0")};
`;
const Filler = styled.div`
  background: ${C.panel};
`;
const Workspace = styled.div`
  flex: 1;
  min-height: 0;
  margin-top: 2px;
  display: grid;
  grid-template-columns: 502px 9px minmax(0, 1fr);
  background: ${C.canvas};
`;
const Side = styled.div`
  display: flex;
  flex-direction: column;
  min-height: 0;
`;
const View = styled.div<{ $g: number }>`
  flex: ${(p) => p.$g} 1 0;
  min-height: 0;
  position: relative;
  overflow: hidden;
`;
const Scene = styled.svg`
  display: block;
  width: 100%;
  height: 100%;
  fill: none;
  font-family: ${UI};
`;
const stripes = (deg: number) => `repeating-linear-gradient(${deg}deg, #454545 0 1px, #222529 1px 3px)`;
const HSplit = styled.div`
  flex: none;
  height: 10px;
  background: ${stripes(180)};
`;
const VSplit = styled.div`
  background: ${stripes(90)};
`;
const CubeCorner = styled.div`
  position: absolute;
  top: 30px;
  right: 12px;
  width: 104px;
  display: flex;
  flex-direction: column;
  align-items: center;
  gap: 38px;
`;
const Pill = styled.button<{ $big?: boolean }>`
  width: ${(p) => (p.$big ? 143 : 104)}px;
  height: 24px;
  padding: 0 9px;
  display: flex;
  align-items: center;
  justify-content: space-between;
  border-radius: 8px;
  background: ${(p) => (p.$big ? "#67747b" : "#3e454c")};
  color: #222a32;
  font-family: ${SF};
  font-size: 20px;
  line-height: 24px;
`;
const PillArrow = ({ f = "none" }: any) => (
  <Glyph $s={18} viewBox="0 0 18 18" aria-hidden><path d="M1 5h16l-8 9z" stroke="#222a32" strokeWidth={1.500} fill={f} /></Glyph>
);

const MINOR = "#272f3a";
const MAJOR = "#323a4b";

type VP = { ox: number; oy: number; step: number; size: number; label: string; above?: boolean; turn: number; pill: string; g: number };
const vps: VP[] = [
  { ox: 60, oy: 478, step: 59.6, size: 25, label: "BACK", above: true, turn: 180, pill: "WCS", g: 540 },
  { ox: 142, oy: 274, step: 20.4, size: 40, label: "TOP", turn: 0, pill: "Unn...", g: 534 },
  { ox: 144, oy: 264, step: 22, size: 43, label: "RIGHT", turn: -90, pill: "Unn...", g: 540 },
];
const range = (a: number, b: number) => Array.from({ length: b - a + 1 }, (_, i) => a + i);

const SmallView = ({ v }: { v: VP }) => (
  <View $g={v.g}>
    <Scene aria-label={`${v.label} view`}>
      <g shapeRendering="crispEdges">
        {range(-30, 30).map((i) => <path key={`x${i}`} d={`M${Math.round(v.ox + i * v.step)} 0V2000`} stroke={i % 5 ? MINOR : MAJOR} strokeWidth={1} />)}
        {range(-30, 30).map((i) => <path key={`y${i}`} d={`M0 ${Math.round(v.oy + i * v.step)}H4000`} stroke={i % 5 ? MINOR : MAJOR} strokeWidth={1} />)}
        <path d={`M${v.ox} ${v.oy}V0`} stroke="#1f7a25" />
        <path d={`M${v.ox} ${v.oy}H4000`} stroke="#7d2229" />
        <rect x={v.ox} y={v.oy - v.size} width={v.size} height={v.size} stroke="#f0f0f0" strokeWidth={2} />
      </g>
    </Scene>
    <CubeCorner>
      <Glyph $s={56} viewBox="-30 -8 56 56" aria-hidden>
        {v.above && <ellipse rx={48} ry={3} cy={-1} stroke="#3a3f47" strokeWidth={1.500} />}
        <rect x={-18} y={1} width={36} height={36} fill="#54585d" />
        <text transform={`translate(0 19) rotate(${v.turn})`} fontSize={11} fontWeight={700} fill="#42474d" textAnchor="middle" dominantBaseline="central">{v.label}</text>
        {!v.above && <path d="M-18 36c-40 1-40 5 18 6c58-1 58-5 18-6" stroke="#3a3f47" strokeWidth={1.500} />}
      </Glyph>
      <Pill>{v.pill}<PillArrow /></Pill>
    </CubeCorner>
  </View>
);

const Grip = ({ vertical = false }: any) =>
  vertical ? <path d="M3 0v26M7 0v26" stroke="#8a8a8a" /> : <path d="M0 3h26M0 7h26" stroke="#8a8a8a" />;

const MainView = styled.div`
  position: relative;
  margin: 2px -2px 2px 2px;
  min-width: 0;
  overflow: hidden;
  &::after {
    content: "";
    position: absolute;
    inset: 0;
    pointer-events: none;
    box-shadow: inset 0 0 0 1px #15324f, inset 0 0 0 2px #1d2a38, inset 0 0 0 3px #0f4880, inset 0 0 0 4px #16314e,
      inset 0 0 0 5px #1477e6, inset 0 0 0 6px #15375a, inset 0 0 0 7px #0f4880, inset 0 0 0 8px #1d2a38, inset 0 0 0 9px #17304a;
  }
`;
const ViewLabels = styled.div`
  position: absolute;
  top: 8px;
  left: 31px;
  height: 26px;
  display: flex;
  align-items: center;
  gap: 11px;
  color: #a3a5a6;
  font-size: 24px;
  font-weight: 600;
`;
const Bar = styled.span`
  width: 2px;
  height: 26px;
  background: #a3a5a6;
`;
const CubeBig = styled.div`
  position: absolute;
  top: 74px;
  right: 23px;
  width: 280px;
  display: flex;
  flex-direction: column;
  align-items: center;
  gap: 45px;
`;
const CubeSvg = styled.svg`
  width: 280px;
  height: 220px;
  display: block;
  overflow: visible;
  font-family: ${UI};
`;
const Console = styled.form`
  position: absolute;
  left: 3px;
  bottom: 0;
  width: 994px;
  display: grid;
  grid-template-columns: 76px 1fr;
  row-gap: 2px;
  z-index: 1;
`;
const Log = styled.div`
  grid-column: 2;
  height: 92px;
  padding: 2px 8px 0 9px;
  background: ${C.panel};
  border: 1px solid #343b48;
  display: flex;
  justify-content: space-between;
  align-items: flex-end;
  font-size: 20px;
  line-height: 30px;
  color: #d6d6d6;
`;
const LogText = styled.div`
  align-self: flex-start;
`;
const Thumb = styled.div`
  width: 8px;
  height: 40px;
  border-radius: 4px;
  background: #9ea2a9;
`;
const Prompt = styled.button`
  height: 46px;
  background: ${C.panel};
  border-right: 1px solid #2c333e;
  display: flex;
  align-items: center;
  justify-content: center;
  gap: 6px;
  color: #d6d6d6;
`;
const CommandRow = styled.div`
  height: 46px;
  background: ${C.panel};
  display: flex;
  align-items: center;
  padding: 0 9px;
`;
const CommandInput = styled.input`
  flex: 1;
  height: 42px;
  align-self: flex-start;
  font-size: 21px;
  font-style: italic;
  &::placeholder { color: #b4b7bc; opacity: 1; }
`;

const slope = 0.2185;
const Cylinder = ({ x1, y1, x2, y2, c, hi }: any) => (
  <>
    <path d={`M${x1} ${y1}L${x2} ${y2}`} stroke={c} strokeWidth={11} strokeLinecap="round" />
    <path d={`M${x1} ${y1}L${x2} ${y2}`} stroke={hi} strokeWidth={3} />
  </>
);
const MainScene = () => (
  <Scene aria-label="Model viewport">
    <g transform="translate(-695 -120)">
      {range(0, 9).map((i) => {
        const x = 739 + 183 * i;
        return <path key={i} d={`M${x} 100V2400`} stroke={i === 2 || i === 7 ? MAJOR : "#252d38"} strokeWidth={i === 7 ? 2 : 1} />;
      })}
      {range(-8, 10).map((i) => {
        const y = 1139 - 188.3 * i;
        return <path key={i} d={`M697 ${y}L3697 ${y - 3000 * slope}`} stroke={i % 5 ? "#252d38" : MAJOR} strokeWidth={i % 5 ? 1 : 1.5} />;
      })}
      <path d="M1105.500 100V674" stroke="#1f7a25" strokeWidth={1.500} />
      <path d={`M1663 927L3000 ${927 - 1337 * slope}`} stroke="#7d2229" strokeWidth={1.300} />

      <path d="M1106 674L1470 594 1663 745 1663 1122 1298 1201 1106 1049z" fill="#727675" />
      <path d="M1470 594L1663 745 1470 787z" fill="#7c8080" />
      <path d="M1298 825L1470 787 1470 969 1298 1007z" fill="#6b6f72" />
      <path d="M1298 1007L1470 969 1663 1122 1298 1201z" fill="#777b7b" />
      <path d="M1106 1049L1298 1007 1298 1201z" fill="#7b7f7e" />
      <path d="M1106 861L1470 782M1288 634V1009" stroke="#5e6363" />
      <path d="M1470 969L1663 927" stroke="#94686a" />
      <path d="M1470 594V969" stroke="#d5d5d5" strokeDasharray="3 2" />
      <path d="M1190 1031L1470 969 1663 1122" stroke="#c9c9c9" strokeWidth={1.300} />
      <path d="M1105.500 674V960" stroke="#e9f3e9" strokeWidth={1.500} strokeDasharray="5 2" />
      <path d="M1106 674L1470 594 1663 745 1663 1122 1298 1201 1106 1049M1106 674L1298 825 1663 745M1298 825V1201" stroke="#fff" strokeWidth={1.500} />

      <text x={1102} y={954} fontSize={34} fontWeight={300} fill="#25b42a">Y</text>
      <text x={1187} y={1022} fontSize={34} fontWeight={300} fill="#e0433f">X</text>
      <text x={1147} y={1078} fontSize={34} fontWeight={300} fill="#1f6df0">Z</text>
      <Cylinder x1={1112} y1={1048} x2={1190} y2={1031} c="#a84845" hi="#cf7b78" />
      <Cylinder x1={1105} y1={1042} x2={1105} y2={966} c="#3a7d3a" hi="#5cad5c" />
      <Cylinder x1={1107} y1={1050} x2={1149} y2={1083} c="#3160ab" hi="#3f78cf" />

      <path d="M1859 923L1997 894" stroke="#c06a68" strokeWidth={1.500} />
      <path d="M1881 897L1953 951" stroke="#5b64b8" strokeWidth={1.500} />
      <path d="M1903 816V962" stroke="#5fae52" strokeWidth={2} />
      <rect x={1897} y={908} width={12} height={12} fill={C.canvas} stroke="#fff" strokeWidth={1.500} />
    </g>
  </Scene>
);
const NavCube = () => (
  <CubeSvg viewBox="1910 194 280 220" aria-hidden>
    <defs>
      <radialGradient id="glow"><stop offset="0" stopColor="#fff" stopOpacity={0.250} /><stop offset="1" stopColor="#fff" stopOpacity={0} /></radialGradient>
      <linearGradient id="lf" x1="0" x2="1"><stop offset="0" stopColor="#adaeb0" /><stop offset="1" stopColor="#9a9b9c" /></linearGradient>
      <linearGradient id="tf" x1="0" y1="0" x2="0" y2="1"><stop offset="0" stopColor="#939494" /><stop offset="1" stopColor="#b0b1b2" /></linearGradient>
    </defs>
    <circle cx={2020} cy={262} r={62} fill="url(#glow)" />
    <path fillRule="evenodd" fill="#474d54" d="M1918 340a132 64 0 1 0 264 0a132 64 0 1 0-264 0zM1950 336a99 47 0 1 1 198 0a99 47 0 1 1-198 0z" />
    <path d="M1983 283l8-2v5z" fill="#b9babb" />
    <g fill="#b9babb" fontWeight={700} textAnchor="middle">
      <text transform="translate(1937 358) rotate(80)" fontSize={42} dominantBaseline="central">S</text>
      <text transform="translate(2115 388) rotate(43) skewX(-34)" fontSize={36} dominantBaseline="central">E</text>
      <text transform="translate(2147 305) rotate(32) skewX(-45)" fontSize={26} dominantBaseline="central">N</text>
    </g>
    <path d="M1987 229l41 32 2 92-41-40z" fill="url(#lf)" />
    <path d="M1987 229l82-15 48 29-89 18z" fill="url(#tf)" />
    <path d="M2028 261l89-18-4 89-83 21z" fill="#afb0b2" />
    <path d="M2019 253l21-3 5 7v19l-16 4-9-8z" fill="#a3a8b2" />
    <path d="M1987 229l41 32 2 92M2028 261l89-18" stroke="#3e4248" strokeWidth={1.500} fill="none" strokeDasharray="12 2 5 1" />
    <g fill="#4d555e" fontWeight={700} textAnchor="middle">
      <text transform="translate(2074 299) rotate(-10)" fontSize={21} dominantBaseline="central">TOP</text>
      <text transform="translate(2048 237) rotate(172) skewX(-30)" fontSize={18} dominantBaseline="central">BACK</text>
      <text transform="translate(2007 290) rotate(84) skewX(-10)" fontSize={19} dominantBaseline="central">LEFT</text>
    </g>
  </CubeSvg>
);

const SplitMarks = styled.svg<{ $v?: boolean }>`
  display: block;
  width: ${(p) => (p.$v ? "9px" : "100%")};
  height: ${(p) => (p.$v ? "100%" : "10px")};
`;
const HBar = () => (
  <HSplit>
    <SplitMarks aria-hidden>
      <path d="M14 5h9M18.500 0v10M36 0v10" stroke="#7d7d7d" />
      <g transform="translate(238 0)"><Grip /></g>
    </SplitMarks>
  </HSplit>
);
const VBar = () => (
  <VSplit>
    <SplitMarks $v aria-hidden>
      <path d="M0 20h9M4.500 16v9M0 41h9M0 1594h9M0 1614h9M4.500 1609v9" stroke="#7d7d7d" />
      {[256, 804, 1350].map((y) => <g key={y} transform={`translate(0 ${y})`}><Grip vertical /></g>)}
    </SplitMarks>
  </VSplit>
);

/* ---------- right panel ---------- */
const Inspector = styled.aside`
  position: relative;
  background: ${C.panel};
  display: flex;
  flex-direction: column;
  min-height: 0;
`;
const SideTabs = styled.div`
  flex: none;
  display: grid;
  grid-template-columns: 103px 103px 103px 1fr 48px;
  column-gap: 2px;
  background: ${C.line};
`;
const SideFill = styled.div`
  height: 44px;
  background: ${C.dark};
`;
const LayersPane = styled.section`
  padding: 0 20px 18px 21px;
  border-bottom: 2px solid ${C.line};
`;
const Head = styled.div`
  display: flex;
  align-items: flex-start;
`;
const Title = styled.h2`
  font-family: ${SF};
  font-size: 23px;
  line-height: 36px;
  font-weight: 500;
  color: #f2f2f2;
`;
const LayerTools = styled.div`
  display: flex;
  margin: 7px auto 0 24px;
`;
const LayerTool = styled.button`
  width: 48px;
  height: 40px;
  display: grid;
  place-items: center;
`;
const IconButton = styled.button`
  display: grid;
  place-items: center;
  height: 28px;
`;
const Box = styled.div<{ $h?: number; $off?: boolean }>`
  height: ${(p) => p.$h ?? 38}px;
  flex: 1;
  min-width: 0;
  display: flex;
  align-items: center;
  gap: 8px;
  padding: 0 7px 0 12px;
  border: 2px solid ${(p) => (p.$off ? "#3a4450" : C.fieldLine)};
  border-radius: 4px;
  background: ${(p) => (p.$off ? "#444c5d" : C.field)};
  color: ${(p) => (p.$off ? "#868c97" : "#fff")};
`;
const Picker = styled.select`
  appearance: none;
  flex: 1;
  min-width: 0;
  height: 100%;
  font-weight: 500;
  opacity: 1;
  &:disabled { font-weight: 400; opacity: 1; }
`;
const Swatch = styled.span`
  display: block;
  flex: none;
  width: 18px;
  height: 18px;
  background: #fff;
  border: 2px solid #000;
`;
const Bulb = styled.span`
  display: block;
  flex: none;
  width: 16px;
  height: 16px;
  border-radius: 50%;
  background: #d9d9d9;
`;
const Stroke = styled.span`
  display: block;
  flex: none;
  width: 64px;
  height: 2px;
  background: #fff;
`;
const Boxes = styled.div`
  display: grid;
  row-gap: 7px;
  margin-top: 19px;
`;
const CurrentMarks = styled.div`
  display: flex;
  align-items: center;
  gap: 16px;
  padding: 0 14px 0 8px;
`;
const Hide = styled.button`
  height: 57px;
  padding-left: 7px;
  display: flex;
  align-items: center;
  gap: 23px;
  font-size: 23px;
  color: #cfd0d2;
`;
const ListBox = styled.div`
  height: 348px;
  border: 2px solid #2b303b;
  background: ${C.field};
`;
const Table = styled.table`
  width: 100%;
  border-collapse: collapse;
  table-layout: fixed;
  th, td { padding: 0; font-weight: 400; text-align: left; }
`;
const Th = styled.th<{ $on?: boolean; $w?: number }>`
  height: 46px;
  width: ${(p) => (p.$w ? p.$w + "px" : "auto")};
  background: ${(p) => (p.$on ? C.field : C.dark)};
  border-right: 2px solid #2a2f3a;
  color: #e2e4e6;
  &:last-child { border-right: 0; }
`;
const Mid = styled.div`
  display: flex;
  justify-content: center;
`;
const NameHead = styled.button`
  width: 100%;
  height: 44px;
  display: flex;
  align-items: center;
  padding: 0 12px 0 8px;
  gap: 14px;
  font-weight: 600;
  position: relative;
`;
const SortMark = styled.span`
  position: absolute;
  bottom: -1px;
  left: 50%;
  margin-left: -7px;
  display: flex;
`;
const Tr = styled.tr<{ $on?: boolean }>`
  height: 38px;
  color: #fff;
  background: ${(p) => (p.$on ? "#919eae" : "transparent")};
`;
const NameCell = styled.div`
  display: flex;
  align-items: center;
  gap: 18px;
`;
const Indent = styled.span`
  padding-left: 14px;
`;
const LayerBar = styled.div`
  height: 51px;
  display: flex;
  align-items: center;
  padding: 0 10px 0 14px;
  gap: 30px;
`;
const Spacer = styled.span`
  flex: 1;
`;
const Dash = styled.span`
  width: 16px;
  height: 4px;
  margin-right: 4px;
  background: #8b909a;
`;
const Columns = styled.button`
  display: flex;
  align-items: center;
  gap: 6px;
`;
const Search = styled.label`
  height: 40px;
  margin-right: 2px;
  padding: 0 10px 0 12px;
  display: flex;
  align-items: center;
  gap: 9px;
  border-radius: 6px;
  background: #fff;
  font-family: ${SF};
  font-size: 24px;
`;
const SearchInput = styled.input`
  flex: 1;
  color: #333;
  &::placeholder { color: #bcbcbc; opacity: 1; }
`;
const PropsPane = styled.section`
  padding: 0 20px 0 21px;
`;
const Segs = styled.div`
  margin-left: auto;
  height: 28px;
  display: flex;
  border: 2px solid #2f3642;
  border-top: 0;
  font-size: 18px;
`;
const Seg = styled.button<{ $on?: boolean }>`
  width: 58px;
  background: ${(p) => (p.$on ? C.field : "#3e4555")};
  color: ${(p) => (p.$on ? "#fff" : "#858b95")};
  font-weight: ${(p) => (p.$on ? 600 : 400)};
  border-right: ${(p) => (p.$on ? 0 : 2)}px solid #2f3642;
  line-height: 24px;
`;
const HeadIcons = styled.div`
  display: flex;
  gap: 10px;
  margin-left: 18px;
`;
const SpaceBox = styled.div`
  display: flex;
  margin: 14px 3px 14px 1px;
`;
const Rows = styled.div`
  display: grid;
  grid-template-columns: 287px minmax(0, 1fr);
  column-gap: 18px;
  row-gap: 8px;
  margin-right: 8px;
  align-items: center;
`;
const Label = styled.label`
  text-align: right;
  font-size: 23px;
  color: #d3d4d6;
  line-height: 38px;
`;
const Cell = styled.div`
  display: flex;
  gap: 5px;
`;
const TextBox = styled.input`
  flex: 1;
  min-width: 0;
  height: 38px;
  padding: 3px 7px 0;
  font-size: 23px;
  color: #fff;
  background: ${C.field};
  border: 2px solid ${C.fieldLine};
  border-radius: 4px;
  &:disabled { background: #444c5d; border-color: #3a4450; color: #868c97; }
`;
const SliderBox = styled.div`
  flex: 1;
  height: 34px;
  margin: 2px 1px 2px 6px;
  border: 2px solid #2b3a3f;
  background: ${C.field};
  display: flex;
  align-items: center;
  padding-right: 5px;
  font-size: 23px;
  color: #fff;
`;
const Slider = styled.input`
  appearance: none;
  flex: 1;
  min-width: 0;
  height: 30px;
  background: linear-gradient(#9aa1ad, #9aa1ad) 108px 16px / 1px 12px no-repeat;
  &::-webkit-slider-thumb { appearance: none; width: 3px; height: 26px; background: linear-gradient(#5b9bf0 0 6px, transparent 6px 20px, #5b9bf0 20px); }
`;
const SmallPick = styled.button<{ $w: number; $flat?: boolean }>`
  width: ${(p) => p.$w}px;
  height: 38px;
  display: flex;
  align-items: center;
  justify-content: center;
  gap: 12px;
  border: 2px solid ${C.fieldLine};
  border-radius: 4px;
  background: ${(p) => (p.$flat ? C.panel : C.field)};
`;
const SwatchPad = styled.span`
  display: block;
  padding: 0 13px 0 6px;
`;
const LinePad = styled.span`
  display: block;
  padding: 0 20px 0 2px;
`;

const props: { label: string; value: string; kind?: string }[] = [
  { label: "Color", value: "ByLayer", kind: "color" },
  { label: "Layer", value: "cubo" },
  { label: "Linetype", value: "ByLayer", kind: "line" },
  { label: "Linetype scale", value: "1.000", kind: "text" },
  { label: "Lineweight", value: "ByLayer" },
  { label: "Transparency", value: "0", kind: "range" },
  { label: "Text style", value: "Standard" },
  { label: "Dimension style", value: "Standard" },
  { label: "Multileader style", value: "Standard" },
  { label: "Table style", value: "Standard" },
  { label: "Annotation scale", value: "1:1" },
  { label: "Text height", value: "0.200", kind: "pick" },
  { label: "Plot style", value: "ByColor" },
  { label: "Plot style table", value: "None" },
  { label: "Plot style attached to", value: "Model", kind: "off" },
  { label: "Plot table type", value: "Not available", kind: "off" },
];

const PropField = ({ id, value, kind }: { id: string; value: string; kind?: string }) => {
  if (kind === "text" || kind === "off") return <TextBox id={id} defaultValue={value} disabled={kind === "off"} />;
  if (kind === "pick")
    return (
      <>
        <TextBox id={id} defaultValue={value} />
        <SmallPick $w={39} $flat aria-label="Pick height"><Icon name="pick" /></SmallPick>
      </>
    );
  if (kind === "range")
    return (
      <>
        <SliderBox><Slider id={id} type="range" min={0} max={90} defaultValue={0} />{value}</SliderBox>
        <SmallPick $w={77} aria-label="Transparency source"><Icon name="layersBlue" s={28} /><Tri /></SmallPick>
      </>
    );
  return (
    <Box>
      {kind === "color" && <SwatchPad><Swatch /></SwatchPad>}
      {kind === "line" && <LinePad><Stroke /></LinePad>}
      <Picker id={id} defaultValue={value}><option>{value}</option></Picker>
      <Tri />
    </Box>
  );
};

const InspectorPanel = () => (
  <Inspector>
    <SideTabs>
      <ModeTab $kind="on" aria-label="Layers and properties"><Icon name="rInfo" /></ModeTab>
      <ModeTab $kind="off" aria-label="Reference manager"><Icon name="rClip" /></ModeTab>
      <ModeTab $kind="off" aria-label="Content"><Icon name="rCalc" /></ModeTab>
      <SideFill />
      <ModeTab $kind="more" aria-label="Collapse"><Chevrons /></ModeTab>
    </SideTabs>
    <LayersPane>
      <Head>
        <Title>Layers</Title>
        <LayerTools>
          {["lyWalk", "lyMatch", "lyPrev", "lyIso", "lyUn", "lyFrz", "lyOff", "lyLock", "lyUnlock"].map((n) => (
            <LayerTool key={n} aria-label={n}><Icon name={n} /></LayerTool>
          ))}
        </LayerTools>
        <IconButton aria-label="Undock layers"><Icon name="dock" /></IconButton>
      </Head>
      <Boxes>
        <Box $h={49}>
          <CurrentMarks>
            <Bulb />
            <Glyph $s={20} viewBox="-10 -10 20 20" aria-hidden><Lock x={0} y={0} c="#6c7585" bg={C.field} /></Glyph>
            <Glyph $s={18} viewBox="-10 -10 20 20" aria-hidden><Snow x={0} y={0} c="#6c7585" /></Glyph>
            <Swatch />
          </CurrentMarks>
          <Picker aria-label="Current layer"><option>cubo</option></Picker>
          <Tri />
        </Box>
        <Box $h={49}>
          <Picker aria-label="Layer state"><option>Unsaved Layer State</option></Picker>
          <Tri />
        </Box>
      </Boxes>
      <Hide><Tri $w={18} $h={14} $c="#8b8f93" />Hide Layer List</Hide>
      <ListBox>
        <Table>
          <thead>
            <tr>
              <Th $w={51}>
                <Mid>
                  <Glyph $s={24} viewBox="0 0 24 24" aria-label="On">
                    <path d="M0 12C5 3 19 3 24 12 19 21 5 21 0 12z" fill="#e2e4e6" />
                    <circle cx={12} cy={12} r={4.500} stroke={C.dark} strokeWidth={2} />
                  </Glyph>
                </Mid>
              </Th>
              <Th $on>
                <NameHead>
                  <Glyph $s={18} viewBox="0 0 18 18" aria-hidden><path d="M1 1h16v16h-16z" stroke="#e2e4e6" strokeWidth={2} /><path d="M17 1v16h-16z" fill="#e2e4e6" /></Glyph>
                  Name
                  <Spacer />
                  <Glyph $s={16} viewBox="0 0 16 16" aria-hidden><path d="M3 6l5-6 5 6zM3 10l5 6 5-6z" fill="#e2e4e6" /></Glyph>
                  <SortMark><Tri $up $w={13} $h={9} $c="#4c95ea" /></SortMark>
                </NameHead>
              </Th>
              <Th $w={44}><Mid><Glyph $s={20} viewBox="-11 -11 22 22" aria-label="Freeze"><Snow x={0} y={0} c="#e2e4e6" s={1.100} /></Glyph></Mid></Th>
              <Th $w={44}><Mid><Glyph $s={20} viewBox="-10 -10 20 20" aria-label="Lock"><Lock x={0} y={0} c="#e2e4e6" bg={C.dark} /></Glyph></Mid></Th>
              <Th $w={94}><Mid><Glyph $s={18} viewBox="0 0 18 18" aria-label="Lineweight"><path d="M0 3h18v2h-18zM0 8h18v3h-18zM0 14h18v4h-18z" fill="#e2e4e6" /></Glyph></Mid></Th>
              <Th $w={94}><Mid><Glyph $s={18} viewBox="0 0 18 18" aria-label="Linetype"><path d="M0 3h18" stroke="#e2e4e6" strokeWidth={2} strokeDasharray="2 2" /><path d="M0 9h18" stroke="#e2e4e6" strokeWidth={2} strokeDasharray="5 2" /><path d="M0 16h18" stroke="#e2e4e6" strokeWidth={2} /></Glyph></Mid></Th>
              <Th $w={42}><Mid><Glyph $s={20} viewBox="0 0 20 20" aria-label="Viewport freeze"><path d="M1 2h14v12h-14zM5 5h14v13h-14zM8 8h5v4h-5z" stroke="#e2e4e6" strokeWidth={2} /></Glyph></Mid></Th>
            </tr>
          </thead>
          <tbody>
            {["0", "cubo"].map((n, i) => (
              <Tr key={n} $on={i === 1}>
                <td><Mid><Bulb /></Mid></td>
                <td><NameCell><Swatch />{n}</NameCell></td>
                <td /><td />
                <td><Indent>D...</Indent></td>
                <td><Mid><Stroke /></Mid></td>
                <td />
              </Tr>
            ))}
          </tbody>
        </Table>
      </ListBox>
      <LayerBar>
        {["sheetLines", "sheetList", "folder", "folderFx"].map((n) => <IconButton key={n} aria-label={n}><Icon name={n} s={30} /></IconButton>)}
        <Spacer />
        <Dash />
        <Columns aria-label="Columns">
          <Glyph $s={20} viewBox="0 0 20 20" aria-hidden><path d="M1 3h18v15h-18zM7 3v15M13 3v15" stroke={C.light} strokeWidth={2} /></Glyph>
          <Tri $w={11} />
        </Columns>
      </LayerBar>
      <Search>
        <Glyph $s={34} viewBox="0 0 34 34" aria-hidden>
          <circle cx={9} cy={15} r={9} stroke="#444" strokeWidth={1.800} />
          <path d="M15 22l7 7M23 14l4 4 4-4" stroke="#444" strokeWidth={2} />
        </Glyph>
        <SearchInput placeholder="Search for layer" aria-label="Search for layer" />
      </Search>
    </LayersPane>
    <PropsPane>
      <Head>
        <Title>Properties</Title>
        <Segs><Seg>All</Seg><Seg $on>My</Seg></Segs>
        <HeadIcons>
          <IconButton aria-label="Customize properties"><Icon name="propEdit" /></IconButton>
          <IconButton aria-label="Undock properties"><Icon name="dock" /></IconButton>
        </HeadIcons>
      </Head>
      <SpaceBox>
        <Box $h={43} $off>
          <Picker aria-label="Space" disabled><option>Model Space</option></Picker>
          <Tri $c="#7b818c" />
        </Box>
      </SpaceBox>
      <Rows>
        {props.map((p, i) => (
          <React.Fragment key={p.label}>
            <Label htmlFor={`p${i}`}>{p.label}</Label>
            <Cell><PropField id={`p${i}`} value={p.value} kind={p.kind} /></Cell>
          </React.Fragment>
        ))}
      </Rows>
    </PropsPane>
  </Inspector>
);

/* ---------- status bar ---------- */
const Status = styled.footer`
  grid-column: 2 / 4;
  padding: 2px 0;
  display: flex;
  gap: 2px;
  background: ${C.line};
`;
const LayoutTab = styled.button<{ $on?: boolean; $w: number }>`
  width: ${(p) => p.$w}px;
  display: grid;
  place-items: center;
  background: ${(p) => (p.$on ? C.field : C.panel)};
  color: ${(p) => (p.$on ? "#fff" : "#a9adb3")};
  font-weight: ${(p) => (p.$on ? 600 : 400)};
  line-height: 40px;
`;
const StatusFill = styled.div`
  flex: 1;
  background: ${C.panel};
`;
const StatusRight = styled.div`
  flex: none;
  display: flex;
  align-items: center;
  gap: 4px;
  padding: 0 11px 0 13px;
  background: ${C.panel};
  color: #bfc1c4;
`;
const Coords = styled.output`
  min-width: 237px;
  font-size: 24px;
  line-height: 40px;
  white-space: nowrap;
`;
const Toggle = styled.button<{ $on?: boolean }>`
  width: 40px;
  height: 40px;
  display: grid;
  place-items: center;
  background: ${(p) => (p.$on ? "#6a8fc0" : "transparent")};
`;
const Scale = styled.button`
  width: 59px;
  display: flex;
  align-items: center;
  gap: 8px;
`;

const bar = [
  ["fNew", "fOpen", "fSave", "fSaveAs"],
  ["undo", "redo"],
  ["print", "printPrev", "page", "pageEdit"],
  ["imp", "exp", "attach", "web", "compare"],
  ["zoomW", "pan", "orbit"],
  ["props", "qsel", "gcenter", "cgeo", "purge"],
  ["isoNew", "isoRep"],
];
const toggles = ["sGrid*", "sSnap", "sOrtho", "sPolar", "sDyn", "sLw", "sTrans*", "sCyc*", "sOtrack*", "sOsnap*", "sAnno*", "sAnnoAuto", "sAnnoPl"];

export default function App() {
  return (
    <Shell>
      <Global />
      <TopBar>
        {bar.map((g) => (
          <Group key={g[0]}>
            {g.map((n) => <BarButton key={n} aria-label={n}><Icon name={n} /></BarButton>)}
          </Group>
        ))}
      </TopBar>
      <Body>
        <LeftPanel />
        <Center>
          <FileTabs>
            <FileTab aria-label="Start">
              <Glyph $s={28} viewBox="0 0 28 28" aria-hidden>
                <path d="M0 0h14v14h-14z" fill={C.blue} />
                <path d="M16 2h12v12h-12zM2 16h12v12h-12zM16 16h12v12h-12z" fill={C.light} />
              </Glyph>
            </FileTab>
            <FileTab aria-label="New drawing"><Plus /></FileTab>
            <FileTab $on>Drawing4*</FileTab>
            <Filler />
          </FileTabs>
          <Workspace>
            <Side>
              <SmallView v={vps[0]} />
              <HBar />
              <SmallView v={vps[1]} />
              <HBar />
              <SmallView v={vps[2]} />
            </Side>
            <VBar />
            <MainView>
              <MainScene />
              <ViewLabels>
                <Plus s={14} c="#a3a5a6" />
                <span />
                <Bar /><button>Custom View</button>
                <Bar /><button>X-Ray</button>
              </ViewLabels>
              <CubeBig>
                <NavCube />
                <Pill $big>Unnamed<PillArrow f="#8fa0a5" /></Pill>
              </CubeBig>
              <Console>
                <Log>
                  <LogText>
                    Specify rotation angle or [Copy/Reference] &lt;270&gt;: 90<br />
                    Command:<br />
                    Command: *Delete*
                  </LogText>
                  <Thumb />
                </Log>
                <Prompt type="button">&gt;_<Tri $w={11} $h={7} /></Prompt>
                <CommandRow>
                  <CommandInput placeholder="Type a command" aria-label="Command" />
                  <Tri $w={11} $h={7} />
                </CommandRow>
              </Console>
            </MainView>
          </Workspace>
        </Center>
        <InspectorPanel />
        <Status>
          <LayoutTab $on $w={118}>Model</LayoutTab>
          <LayoutTab $w={44} aria-label="New layout"><Plus /></LayoutTab>
          <LayoutTab $w={116}>Layout1</LayoutTab>
          <LayoutTab $w={116}>Layout2</LayoutTab>
          <StatusFill />
          <StatusRight>
            <Coords>2.183,&nbsp; −0.104, 0.000</Coords>
            {toggles.map((t) => {
              const n = t.replace("*", "");
              return <Toggle key={n} $on={t !== n} aria-label={n}><Icon name={n} /></Toggle>;
            })}
            <Scale>1:1<Tri $w={11} /></Scale>
            <Toggle aria-label="Workspace objects"><Icon name="sShapes" /></Toggle>
            <Toggle aria-label="Settings"><Gear s={30} c={C.light} /></Toggle>
          </StatusRight>
        </Status>
      </Body>
    </Shell>
  );
}
